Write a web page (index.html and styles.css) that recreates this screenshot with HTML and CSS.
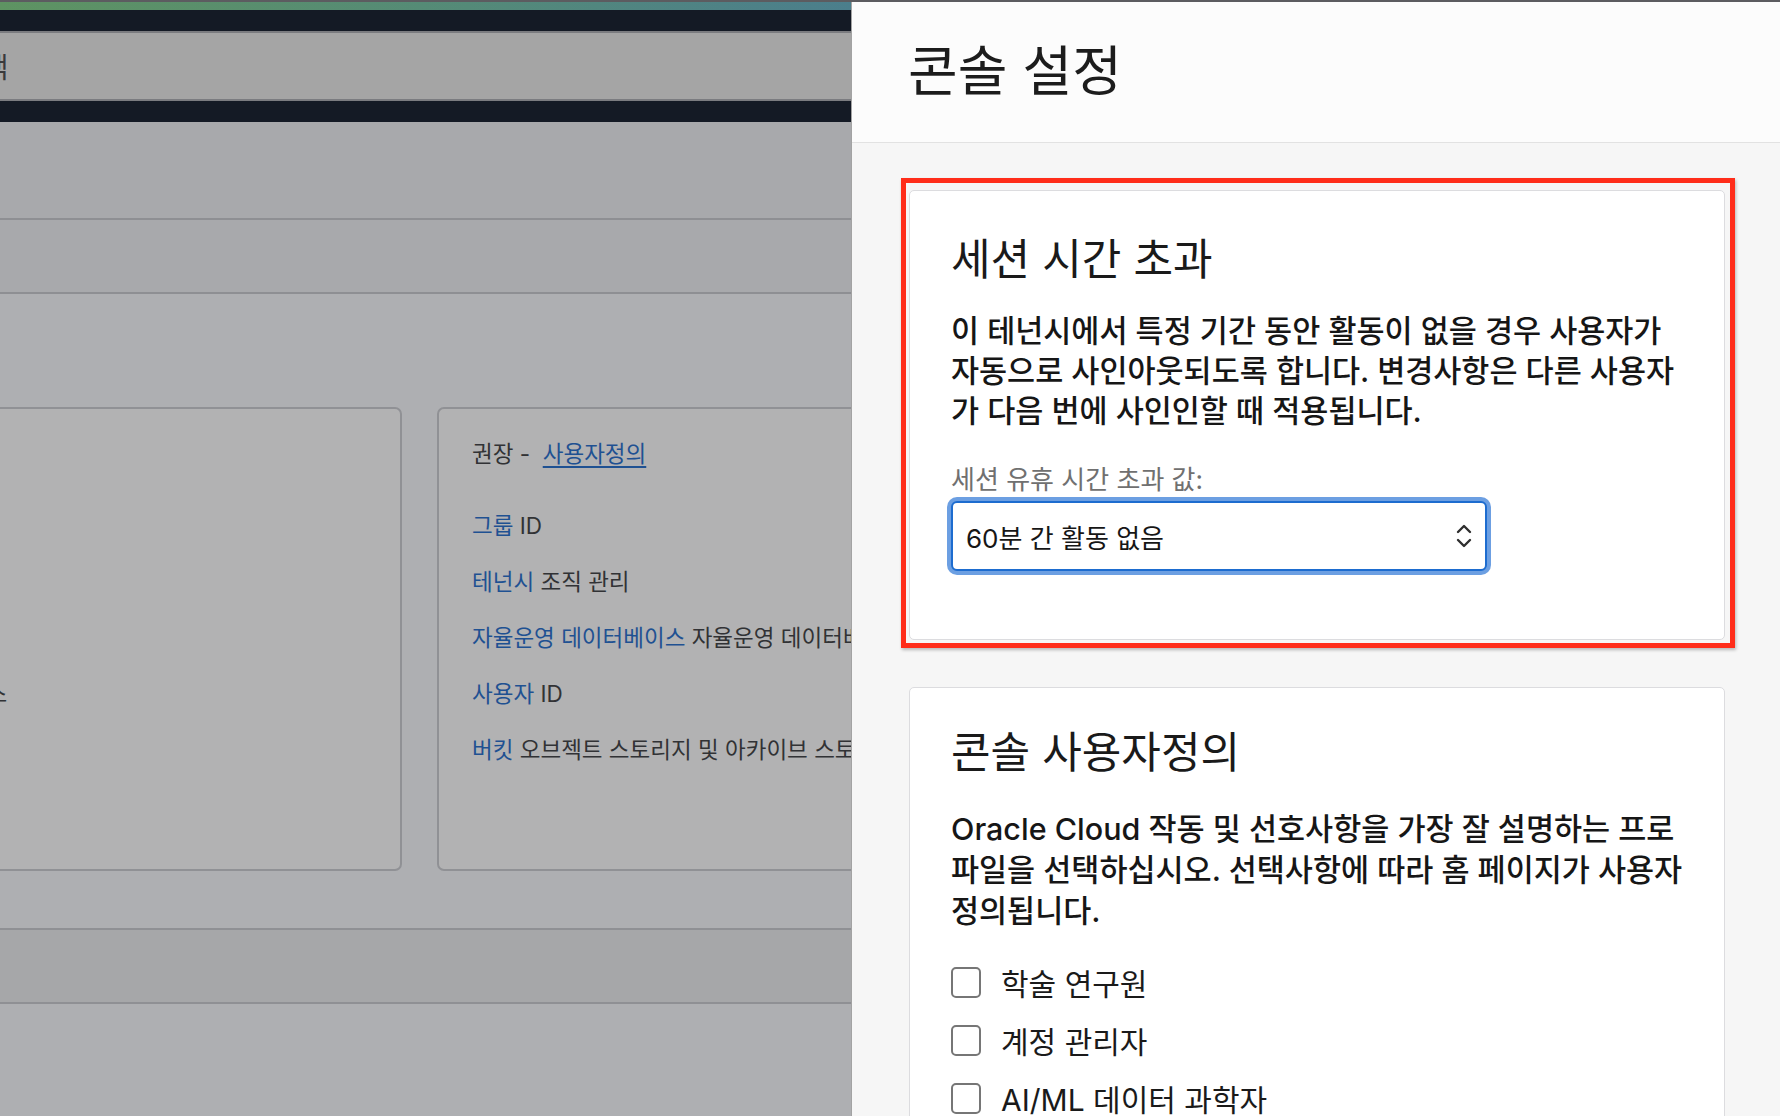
FILE: index.html
```html
<!DOCTYPE html>
<html lang="ko">
<head>
<meta charset="utf-8">
<title>콘솔 설정</title>
<link rel="stylesheet" href="styles.css">
</head>
<body>
<div class="topline"></div>
<div class="screen">
  <div class="console">
    <div class="brand"></div>
    <header class="nav">
      <div class="search"><span class="search-text">검색</span></div>
    </header>
    <div class="band band-tall"></div>
    <div class="band"></div>
    <main class="content">
      <div class="tiles">
        <section class="tile tile-first">
          <div class="row row-head">&nbsp;</div>
          <div class="row">&nbsp;</div>
          <div class="row">&nbsp;</div>
          <div class="row">&nbsp;</div>
          <div class="row"><span class="cut-text">리소스</span></div>
          <div class="row">&nbsp;</div>
        </section>
        <section class="tile">
          <div class="row row-head">권장 - &nbsp;<a class="link underline">사용자정의</a></div>
          <div class="row"><a class="link">그룹</a> ID</div>
          <div class="row"><a class="link">테넌시</a> 조직 관리</div>
          <div class="row"><a class="link">자율운영 데이터베이스</a> 자율운영 데이터베이스</div>
          <div class="row"><a class="link">사용자</a> ID</div>
          <div class="row"><a class="link">버킷</a> 오브젝트 스토리지 및 아카이브 스토리지</div>
        </section>
      </div>
      <div class="band band-lower"></div>
    </main>
  </div>

  <aside class="panel">
    <header class="panel-head">
      <h1 class="panel-title">콘솔 설정</h1>
    </header>
    <div class="panel-body">
      <div class="highlight">
        <section class="card">
          <h2 class="card-title">세션 시간 초과</h2>
          <p class="card-text">이 테넌시에서 특정 기간 동안 활동이 없을 경우 사용자가<br>자동으로 사인아웃되도록 합니다. 변경사항은 다른 사용자<br>가 다음 번에 사인인할 때 적용됩니다.</p>
          <div class="field-label">세션 유휴 시간 초과 값:</div>
          <div class="select">
            <span class="select-value">60분 간 활동 없음</span>
            <svg class="chevrons" width="18" height="30" viewBox="0 0 18 30" aria-hidden="true">
              <polyline points="3,11 9,5 15,11" fill="none" stroke="#2f2f2f" stroke-width="2.4" stroke-linecap="round" stroke-linejoin="round"/>
              <polyline points="3,19 9,25 15,19" fill="none" stroke="#2f2f2f" stroke-width="2.4" stroke-linecap="round" stroke-linejoin="round"/>
            </svg>
          </div>
        </section>
      </div>

      <section class="card card-prefs">
        <h2 class="card-title">콘솔 사용자정의</h2>
        <p class="card-text">Oracle Cloud 작동 및 선호사항을 가장 잘 설명하는 프로<br>파일을 선택하십시오. 선택사항에 따라 홈 페이지가 사용자<br>정의됩니다.</p>
        <ul class="choices">
          <li class="choice"><span class="box"></span><span>학술 연구원</span></li>
          <li class="choice"><span class="box"></span><span>계정 관리자</span></li>
          <li class="choice"><span class="box"></span><span>AI/ML 데이터 과학자</span></li>
        </ul>
      </section>
    </div>
  </aside>
</div>
</body>
</html>
```

FILE: styles.css
```css
* {
  box-sizing: border-box;
}

html, body {
  margin: 0;
  padding: 0;
}

body {
  width: 1780px;
  height: 1116px;
  overflow: hidden;
  font-family: "Inter", "Noto Sans CJK KR", sans-serif;
  background: #aeafb2;
}

.topline {
  height: 2px;
  background: #5c5c60;
}

.screen {
  display: flex;
  height: 1114px;
}

/* ---------- dimmed console behind the panel ---------- */
.console {
  flex: 0 0 851px;
  width: 851px;
  overflow: hidden;
  background: #aeafb2;
}

.brand {
  height: 8px;
  background: linear-gradient(90deg, #5e9362 0%, #548a78 55%, #4b7e8c 100%);
}

.nav {
  background: #141a25;
  padding: 21px 0;
}

.search {
  height: 70px;
  margin-left: -57px;
  padding-left: 14px;
  background: #a5a5a5;
  border-top: 2px solid #7b7c80;
  border-bottom: 2px solid #7b7c80;
  display: flex;
  align-items: center;
}

.search-text {
  font-size: 28px;
  color: #3a3a3c;
  white-space: nowrap;
}

.band {
  height: 74px;
  background: #a8a9ac;
  border-bottom: 2px solid #8e8f93;
}

.band-tall {
  height: 98px;
}

.content {
  padding-top: 113px;
}

.tiles {
  display: flex;
  gap: 35px;
  height: 464px;
}

.tile {
  flex: 0 0 440px;
  height: 464px;
  background: #b2b2b3;
  border: 2px solid #909195;
  border-radius: 7px;
  padding: 31px 0 0 33px;
  font-size: 22.5px;
  line-height: 28px;
  color: #313235;
  white-space: nowrap;
}

.tile-first {
  margin-left: -38px;
}

.row {
  height: 28px;
  margin-bottom: 28px;
}

.row-head {
  margin-bottom: 44px;
}

.cut-text {
  margin-left: -52px;
}

.link {
  color: #1f5192;
}

.underline {
  text-decoration: underline;
  text-underline-offset: 4px;
}

.band-lower {
  margin-top: 57px;
  height: 76px;
  background: #a6a7a9;
  border-top: 2px solid #8f9094;
  border-bottom: 2px solid #8f9094;
}

/* ---------- settings panel ---------- */
.panel {
  flex: 1;
  display: flex;
  flex-direction: column;
  background: #f6f6f6;
  border-left: 1px solid #a3a3a3;
  color: #171717;
}

.panel-head {
  height: 141px;
  flex: none;
  background: #fcfcfc;
  border-bottom: 1px solid #e2e2e2;
  display: flex;
  align-items: center;
  padding-left: 56px;
}

.panel-title {
  margin: 0;
  font-size: 54px;
  font-weight: 400;
  line-height: 1;
  color: #1c1c1c;
}

.panel-body {
  padding: 35px 57px 0 57px;
}

.highlight {
  margin: 0 -10px 0 -8px;
  border: 5px solid #ff2d1a;
  padding: 7px 5px 3px 3px;
  box-shadow: 1px 2px 3px rgba(0, 0, 0, 0.25);
}

.card {
  background: #ffffff;
  border: 1px solid #dcdcdf;
  border-radius: 5px;
  padding: 42px 42px 68px 41px;
}

.card-prefs {
  margin-top: 39px;
  padding-top: 38px;
}

.card-title {
  margin: 0;
  font-size: 43px;
  line-height: 52px;
  font-weight: 400;
  color: #1a1a1a;
}

.card-text {
  margin: 26px 0 0;
  font-size: 30.5px;
  line-height: 40px;
  font-weight: 500;
  color: #161616;
  white-space: nowrap;
}

.card-prefs .card-text {
  margin-top: 30px;
  line-height: 41px;
}

.field-label {
  margin-top: 33px;
  font-size: 26px;
  line-height: 32px;
  color: #707070;
}

.select {
  margin-top: 5px;
  width: 536px;
  height: 70px;
  border: 2px solid #1d6ccf;
  border-radius: 6px;
  box-shadow: 0 0 0 4px #6c9fe2;
  background: #ffffff;
  display: flex;
  align-items: center;
  justify-content: space-between;
  padding: 0 12px 0 13px;
}

.select-value {
  font-size: 26px;
  color: #161616;
}

.chevrons {
  flex: none;
}

.choices {
  list-style: none;
  margin: 31px 0 0;
  padding: 0;
  display: flex;
  flex-direction: column;
  gap: 18px;
}

.choice {
  display: flex;
  align-items: center;
  gap: 20px;
  height: 40px;
  font-size: 30px;
  color: #1a1a1a;
}

.box {
  flex: none;
  width: 30px;
  height: 31px;
  border: 2px solid #767676;
  border-radius: 5px;
  background: #ffffff;
}
```
